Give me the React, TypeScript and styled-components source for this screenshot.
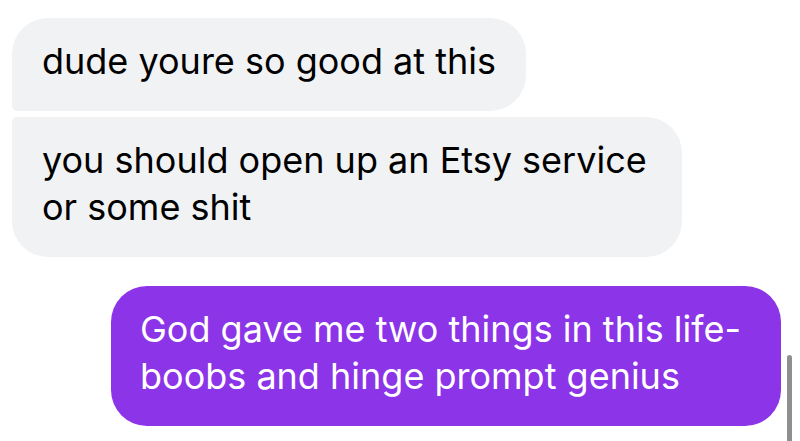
import React from "react";
import styled, { createGlobalStyle } from "styled-components";

const GlobalStyle = createGlobalStyle`
  html, body {
    margin: 0;
    padding: 0;
    background: #ffffff;
  }
  body {
    font-family: Inter, "Liberation Sans", Arial, sans-serif;
    -webkit-font-smoothing: antialiased;
  }
`;

type Side = "in" | "out";
type Corner = "first" | "last" | "single";

const radius = (corner: Corner, side: Side) => {
  const big = "36px";
  const small = "5px";
  if (side === "out") return big;
  if (corner === "first") return `${big} ${big} ${big} ${small}`;
  if (corner === "last") return `${small} ${big} ${big} ${big}`;
  return big;
};

const messages: { side: Side; corner: Corner; text: string }[] = [
  { side: "in", corner: "first", text: "dude youre so good at this" },
  {
    side: "in",
    corner: "last",
    text: "you should open up an Etsy service or some shit",
  },
  {
    side: "out",
    corner: "single",
    text: "God gave me two things in this life- boobs and hinge prompt genius",
  },
];

export default function App() {
  return (
    <>
      <GlobalStyle />
      <Styled.Thread>
        {messages.map((m, i) => (
          <Styled.Row
            key={i}
            $side={m.side}
            $gapAbove={i === 0 ? 0 : messages[i - 1].side === m.side ? 6 : 29}
          >
            <Styled.Bubble $side={m.side} $corner={m.corner}>
              {m.text}
            </Styled.Bubble>
          </Styled.Row>
        ))}
        <Styled.Scrollbar />
      </Styled.Thread>
    </>
  );
}

const Styled = {
  Thread: styled.div`
    position: relative;
    width: 800px;
    height: 441px;
    box-sizing: border-box;
    padding: 18px 19px 0 12px;
    display: flex;
    flex-direction: column;
    overflow: hidden;
  `,
  Row: styled.div<{ $side: Side; $gapAbove: number }>`
    display: flex;
    justify-content: ${(p) => (p.$side === "out" ? "flex-end" : "flex-start")};
    margin-top: ${(p) => p.$gapAbove}px;
  `,
  Bubble: styled.div<{ $side: Side; $corner: Corner }>`
    max-width: 670px;
    box-sizing: border-box;
    padding: 20px 30px 26px 30px;
    padding-left: ${(p) => (p.$side === "out" ? "29px" : "30px")};
    font-size: 36px;
    line-height: 47px;
    color: ${(p) => (p.$side === "out" ? "#ffffff" : "#000000")};
    background: ${(p) => (p.$side === "out" ? "#8c34e8" : "#f1f2f4")};
    border-radius: ${(p) => radius(p.$corner, p.$side)};
  `,
  Scrollbar: styled.div`
    position: absolute;
    left: 787px;
    top: 355px;
    width: 5px;
    height: 100px;
    border-radius: 3px;
    background: #8f8f8f;
  `,
};
